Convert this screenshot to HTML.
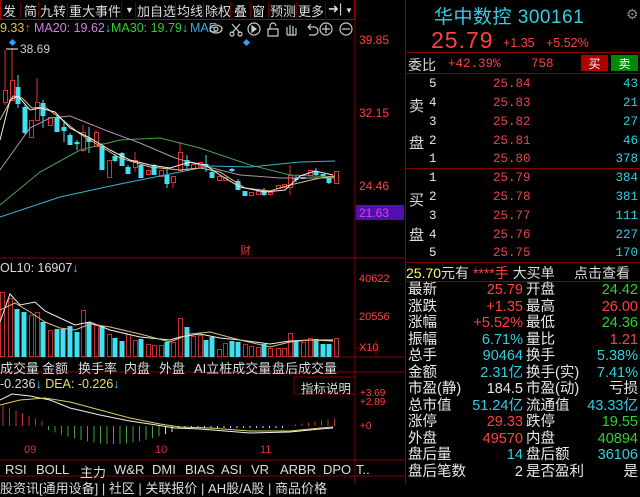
<!DOCTYPE html>
<html><head><meta charset="utf-8">
<style>
*{margin:0;padding:0;box-sizing:border-box}
body{width:640px;height:484px;background:#000;overflow:hidden;position:relative;font-family:"Liberation Sans","Noto Sans CJK SC",sans-serif;color:#ddd}
.a{position:absolute;white-space:nowrap}
.tb{position:absolute;top:0;left:0;width:355px;height:20px;border:1px solid #a00;border-top:none}
.tb span{position:absolute;top:1px;font-size:13px;color:#ddd}
.sep{position:absolute;top:2px;width:1px;height:16px;background:#600}
.r{color:#ff4040}.g{color:#30d030}.c{color:#30d0e0}.w{color:#e8e8e8}.y{color:#ffff60}
.rp{position:absolute;left:405px;top:0;width:235px;height:484px;border-left:1px solid #800}
.ob{position:absolute;font-size:12.5px;font-family:"Liberation Mono","Noto Sans CJK SC",monospace}
.st{position:absolute;font-size:14.5px;line-height:16.5px}
.hl{position:absolute;left:0;width:235px;height:1px;background:#800}
.tab span{position:absolute;font-size:13px;color:#ddd}
</style></head><body>
<div class="tb">
<span style="left:2px">发</span><div class="sep" style="left:19px"></div>
<span style="left:23px">简</span><div class="sep" style="left:37px"></div>
<span style="left:39px">九转</span><div class="sep" style="left:66px"></div>
<span style="left:68px">重大事件</span><div class="sep" style="left:120px"></div>
<span style="left:124px;font-size:9px;top:5px">▼</span><div class="sep" style="left:134px"></div>
<span style="left:136px">加自选</span><div class="sep" style="left:174px"></div>
<span style="left:176px">均线</span><div class="sep" style="left:202px"></div>
<span style="left:204px">除权</span><div class="sep" style="left:229px"></div>
<span style="left:233px">叠</span><div class="sep" style="left:249px"></div>
<span style="left:251px">窗</span><div class="sep" style="left:267px"></div>
<span style="left:269px">预测</span><div class="sep" style="left:295px"></div>
<span style="left:297px">更多</span><div class="sep" style="left:324px"></div>
<span style="left:327px">➜|</span><span style="left:344px;font-size:8px;top:6px">▼</span>
</div>
<div class="a" style="top:21px;left:0;font-size:12.5px"><span style="color:#f0c040">9.33</span><span class="r">↑</span></div>
<div class="a" style="top:21px;left:34px;font-size:12.5px;color:#d080e0">MA20: 19.62<span class="c">↓</span></div>
<div class="a" style="top:21px;left:111px;font-size:12.5px;color:#30d030">MA30: 19.79<span class="c">↓</span></div>
<div class="a" style="top:21px;left:190px;font-size:12.5px;color:#30b0e0">MAE</div>
<svg class="a" style="left:208px;top:21px" width="150" height="16" fill="none" stroke="#ccc" stroke-width="1.2">
<ellipse cx="8" cy="8" rx="6" ry="4"/><circle cx="8" cy="8" r="2"/>
<path d="M24 3l8 9M32 3l-8 9"/><circle cx="24" cy="13" r="2"/><circle cx="32" cy="13" r="2"/>
<circle cx="46" cy="8" r="6"/><path d="M44 5l4 3-4 3z" fill="#ccc"/>
<path d="M60 8h10v7h-10z M62 8v-3a3 3 0 0 1 6 0"/>
<path d="M79 14v-8M82 14v-10M85 14v-9M88 14v-7M79 14h9"/>
<path d="M100 6h6a4 4 0 0 1 0 8h-5M100 6l3-3M100 6l3 3"/>
<circle cx="118" cy="8" r="6"/><path d="M114 8h8M118 4v8"/>
<circle cx="138" cy="8" r="6"/><path d="M134 8h8"/>
</svg>
<svg class="a" style="left:0;top:0" width="405" height="484" id="ch">
<line x1="355" y1="0" x2="355" y2="484" stroke="#800"/>
<line x1="0" y1="258" x2="405" y2="258" stroke="#800"/>
<line x1="0" y1="357" x2="405" y2="357" stroke="#800"/>
<line x1="0" y1="372" x2="405" y2="372" stroke="#800"/>
<line x1="0" y1="460" x2="405" y2="460" stroke="#800"/>
<line x1="0" y1="476" x2="405" y2="476" stroke="#800"/>
<rect x="356" y="205" width="48" height="15" fill="#5010b0"/>
<g id="cd"></g>
<g fill="none" stroke-width="1">
<polyline stroke="#30b8d0" points="0,217 60,197 120,184 170,174 210,166 250,167 300,162 335,161"/>
<polyline stroke="#50a050" points="0,205 40,172 80,150 120,140 160,138 200,148 250,165 290,175 335,177"/>
<polyline stroke="#b090b0" points="0,170 30,128 50,118 70,116 90,124 110,132 140,143 175,158 200,165 240,175 280,178 310,178 335,178"/>
<polyline stroke="#d8c080" points="0,120 13,96 22,98 32,108 45,107 60,118 80,134 100,146 120,158 150,167 180,170 200,168 220,172 245,188 270,191 290,185 320,178 335,176"/>
<polyline stroke="#f0f0f0" points="0,140 10,100 18,96 30,110 40,108 55,112 70,128 90,138 110,150 130,160 150,165 170,168 190,162 205,165 220,175 240,187 265,192 285,190 300,176 315,171 333,175"/>
</g>
<line x1="6" y1="49" x2="18" y2="49" stroke="#fff"/>
<rect x="10" y="40" width="5" height="5" fill="#30a0ff" transform="rotate(45 12.5 42.5)"/>
<rect x="244" y="40" width="5" height="5" fill="#30a0ff" transform="rotate(45 246.5 42.5)"/>
<g id="vol"></g>
<g fill="none">
<polyline stroke="#f0f0f0" points="0,322 10,294 20,305 35,302 45,311 60,318 75,325 90,322 110,330 140,337 170,340 180,337 200,334 220,338 240,340 270,344 290,341 310,340 333,340"/>
<polyline stroke="#d8c080" points="0,310 15,303 30,312 45,322 60,328 75,330 90,324 110,327 140,334 170,342 190,334 210,332 240,340 270,347 290,342 310,340 333,341"/>
</g>
<line x1="355" y1="348" x2="376" y2="348" stroke="#800"/><line x1="376" y1="340" x2="376" y2="357" stroke="#800"/>
<g id="mc"></g>
<g fill="none">
<polyline stroke="#f0f0f0" points="0,400 12,394 30,396 50,400 70,408 100,415 130,421 150,424 175,428 200,429 250,433 290,432 320,429 333,428"/>
<polyline stroke="#d8d060" points="0,405 20,400 45,398 70,402 100,410 130,418 160,424 180,427 210,428 250,431 290,431 320,428 333,427"/>
</g>
<rect x="294" y="377" width="61" height="17" fill="#000" stroke="#800"/>
<text x="24" y="453" fill="#e03030" font-size="11" font-family="Liberation Sans">09</text>
<text x="155" y="453" fill="#e03030" font-size="11" font-family="Liberation Sans">10</text>
<text x="260" y="453" fill="#e03030" font-size="11" font-family="Liberation Sans">11</text>
</svg>
<div class="a" style="left:20px;top:42px;font-size:12px;color:#ccc">38.69</div>
<div class="a" style="left:240px;top:242px;font-size:11px;color:#e03030">财</div>
<div class="a r" style="left:359px;top:33px;font-size:12px">39.85</div>
<div class="a r" style="left:359px;top:106px;font-size:12px">32.15</div>
<div class="a r" style="left:359px;top:179px;font-size:12px">24.46</div>
<div class="a" style="left:359px;top:206px;font-size:12px;color:#e040e0">21.63</div>
<div class="a" style="left:0;top:261px;font-size:12.5px;color:#ddd">OL10: 16907<span class="c">↓</span></div>
<div class="a r" style="left:359px;top:273px;font-size:11px">40622</div>
<div class="a r" style="left:359px;top:311px;font-size:11px">20556</div>
<div class="a r" style="left:359px;top:342px;font-size:11px">X10</div>
<div class="tab"><span style="left:0;top:358px">成交量</span><span style="left:42px;top:358px">金额</span><span style="left:78px;top:358px">换手率</span><span style="left:124px;top:358px">内盘</span><span style="left:159px;top:358px">外盘</span><span style="left:194px;top:358px">AI立桩成交量</span><span style="left:272px;top:358px">盘后成交量</span></div>
<div class="a" style="left:0;top:377px;font-size:12.5px;color:#ddd">-0.236<span class="c">↓</span> <span style="color:#e8e060">DEA: -0.226</span><span class="c">↓</span></div>
<div class="a" style="left:301px;top:378px;font-size:12.5px;color:#ddd">指标说明</div>
<div class="a r" style="left:360px;top:389px;font-size:10px;line-height:9px">+3.69<br>+2.89</div>
<div class="a r" style="left:360px;top:421px;font-size:10px">+0</div>
<div class="tab"><span style="left:5px;top:462px">RSI</span><span style="left:36px;top:462px">BOLL</span><span style="left:80px;top:462px">主力</span><span style="left:114px;top:462px">W&amp;R</span><span style="left:152px;top:462px">DMI</span><span style="left:185px;top:462px">BIAS</span><span style="left:221px;top:462px">ASI</span><span style="left:251px;top:462px">VR</span><span style="left:280px;top:462px">ARBR</span><span style="left:323px;top:462px">DPO</span><span style="left:356px;top:462px">T..</span><span style="left:0;top:478px">股资讯[通用设备] | 社区 | 关联报价 | AH股/A股 | 商品价格</span></div>
<div class="rp">
<div class="a c" style="left:28px;top:2px;font-size:19px;letter-spacing:0.5px">华中数控 300161</div>
<div class="a" style="left:220px;top:6px;font-size:14px;color:#888">⚙</div>
<div class="a r" style="left:25px;top:27px;font-size:23px;letter-spacing:1px">25.79</div>
<div class="a r" style="left:97px;top:36px;font-size:12.5px">+1.35</div>
<div class="a r" style="left:140px;top:36px;font-size:12.5px">+5.52%</div>
<div class="hl" style="top:52px"></div>
<div class="a" style="left:2px;top:55px;font-size:14px">委比</div>
<div class="ob r" style="left:42px;top:57px">+42.39%</div>
<div class="ob r" style="left:125px;top:57px">758</div>
<div class="a" style="left:175px;top:55px;width:27px;height:16px;background:#a00;color:#fff;font-size:12px;text-align:center">买</div>
<div class="a" style="left:205px;top:55px;width:27px;height:16px;background:#080;color:#fff;font-size:12px;text-align:center">卖</div>
<div class="hl" style="top:73px"></div>
<div class="a" style="left:3px;top:95px;font-size:15px">卖</div>
<div class="a" style="left:3px;top:132px;font-size:15px">盘</div>
<div class="a" style="left:3px;top:189px;font-size:15px">买</div>
<div class="a" style="left:3px;top:224px;font-size:15px">盘</div>
<div class="hl" style="top:168px"></div>
<div class="hl" style="top:262px"></div>
<div id="ob"></div>
<div class="a" style="left:0;top:263px;font-size:14px"><span class="y">25.70</span>元有 <span class="r">****手</span> 大买单</div>
<div class="a" style="left:168px;top:263px;font-size:14px">点击查看</div>
<div class="hl" style="top:281px"></div>
<div id="st"></div>
</div>
<script>
var ch=document.getElementById('cd'),h='';
var C=[[5,90,102,50,105,'r'],[12,80,100,48,100,'r'],[18,87,104,75,108,'c'],[25,107,133,105,135,'c'],[31,120,137,120,137,'r'],[37,102,120,78,120,'r'],[43,103,116,100,128,'c'],[50,117,125,117,125,'r'],[57,117,132,115,132,'c'],[64,127,131,120,142,'c'],[70,135,145,133,145,'c'],[77,142,144,140,150,'c'],[83,132,150,125,152,'r'],[89,138,142,127,153,'c'],[96,132,146,130,146,'r'],[102,146,170,143,170,'c'],[109,160,177,160,177,'r'],[115,156,161,154,162,'c'],[122,153,166,152,166,'c'],[128,167,174,165,174,'c'],[135,160,167,152,172,'r'],[141,165,178,165,178,'c'],[148,170,174,170,174,'r'],[154,165,175,164,175,'c'],[161,170,176,170,176,'r'],[167,175,184,168,188,'c'],[173,176,182,176,188,'r'],[180,152,170,142,170,'r'],[187,160,166,155,170,'c'],[193,164,168,164,168,'r'],[200,162,166,162,166,'r'],[206,164,166,155,172,'c'],[212,172,178,170,178,'c'],[219,176,180,176,180,'r'],[225,177,180,177,180,'r'],[232,169,171,168,172,'c'],[238,181,190,179,190,'c'],[245,191,196,191,196,'c'],[251,192,195,192,195,'r'],[258,191,194,191,194,'r'],[264,190,195,188,196,'c'],[270,192,194,192,194,'r'],[278,185,188,185,188,'r'],[284,184,187,184,187,'r'],[290,175,187,165,195,'r'],[296,178,180,176,182,'c'],[303,177,179,177,179,'c'],[310,170,175,170,175,'r'],[316,171,175,168,176,'c'],[323,174,176,174,176,'c'],[329,178,183,176,184,'c'],[336,171,183,171,183,'r']];
C.forEach(function(k){var col=k[5]=='r'?'#e03030':'#40e0f0';h+='<line x1="'+k[0]+'" y1="'+k[3]+'" x2="'+k[0]+'" y2="'+k[4]+'" stroke="'+col+'"/>';
if(k[5]=='r')h+='<rect x="'+(k[0]-2)+'.5" y="'+k[1]+'.5" width="4" height="'+Math.max(1,k[2]-k[1])+'" fill="#000" stroke="'+col+'"/>';else h+='<rect x="'+(k[0]-2.5)+'" y="'+k[1]+'" width="5" height="'+Math.max(1,k[2]-k[1])+'" fill="'+col+'"/>';});
ch.innerHTML=h;
var V=[[2,292,'r'],[10,298,'r'],[17,309,'c'],[24,312,'c'],[31,315,'r'],[37,312,'r'],[43,322,'c'],[50,330,'r'],[57,329,'c'],[63,329,'c'],[70,326,'c'],[77,332,'c'],[83,310,'r'],[89,322,'c'],[96,325,'r'],[102,326,'c'],[109,334,'r'],[115,338,'c'],[122,341,'c'],[128,334,'r'],[135,340,'r'],[141,339,'c'],[148,344,'r'],[154,345,'r'],[161,345,'r'],[167,342,'c'],[173,342,'r'],[180,318,'r'],[187,327,'c'],[193,336,'r'],[200,335,'r'],[206,340,'c'],[212,337,'c'],[219,349,'r'],[225,343,'r'],[232,341,'c'],[238,342,'c'],[245,344,'r'],[251,346,'r'],[258,347,'r'],[264,344,'c'],[270,348,'r'],[278,348,'r'],[284,348,'r'],[290,333,'r'],[296,341,'c'],[303,342,'r'],[310,338,'r'],[316,339,'c'],[323,344,'c'],[329,344,'c'],[336,338,'r']];
h='';V.forEach(function(k){if(k[2]=='r')h+='<rect x="'+(k[0]-2)+'.5" y="'+k[1]+'.5" width="4" height="'+(356-k[1])+'" fill="none" stroke="#c03030"/>';else h+='<rect x="'+(k[0]-2.5)+'" y="'+k[1]+'" width="5" height="'+(357-k[1])+'" fill="#40e0f0"/>';});
document.getElementById('vol').innerHTML=h;
h='';for(var x=3;x<340;x+=6.5){var v;if(x<48)v=-(22-x*0.4);else if(x<178)v=4+14*Math.sin((x-48)/130*Math.PI);else if(x<285)v=2;else v=-(x-285)*0.15;
var col=v<0?'#c03030':'#40a040';if(x>165&&x<285)col='#ddd';h+='<line x1="'+x+'" y1="426" x2="'+x+'" y2="'+(426+v)+'" stroke="'+col+'"/>';}
document.getElementById('mc').innerHTML=h;
var ob=[['5','25.84','43',77],['4','25.83','21',96],['3','25.82','27',115],['2','25.81','46',134],['1','25.80','378',152],['1','25.79','384',171],['2','25.78','381',190],['3','25.77','111',209],['4','25.76','227',228],['5','25.75','170',246]];
h='';ob.forEach(function(k){h+='<div class="ob w" style="left:23px;top:'+k[3]+'px">'+k[0]+'</div><div class="ob" style="left:87px;top:'+k[3]+'px;color:#e04848">'+k[1]+'</div><div class="ob c" style="right:2px;top:'+k[3]+'px">'+k[2]+'</div>';});
document.getElementById('ob').innerHTML=h;
var S=[['最新','25.79','r','开盘','24.42','g'],['涨跌','+1.35','r','最高','26.00','r'],['涨幅','+5.52%','r','最低','24.36','g'],['振幅','6.71%','c','量比','1.21','r'],['总手','90464','c','换手','5.38%','c'],['金额','2.31亿','c','换手(实)','7.41%','c'],['市盈(静)','184.5','w','市盈(动)','亏损','w'],['总市值','51.24亿','c','流通值','43.33亿','c'],['涨停','29.33','r','跌停','19.55','g'],['外盘','49570','r','内盘','40894','g'],['盘后量','14','c','盘后额','36106','c'],['盘后笔数','2','w','是否盈利','是','w']];
h='';S.forEach(function(k,i){var t=282+i*16.5;h+='<div class="st w" style="left:2px;top:'+t+'px">'+k[0]+'</div><div class="st '+k[2]+'" style="right:117px;top:'+t+'px">'+k[1]+'</div><div class="st w" style="left:120px;top:'+t+'px">'+k[3]+'</div><div class="st '+k[5]+'" style="right:2px;top:'+t+'px">'+k[4]+'</div>';});
document.getElementById('st').innerHTML=h;
</script>
</body></html>
